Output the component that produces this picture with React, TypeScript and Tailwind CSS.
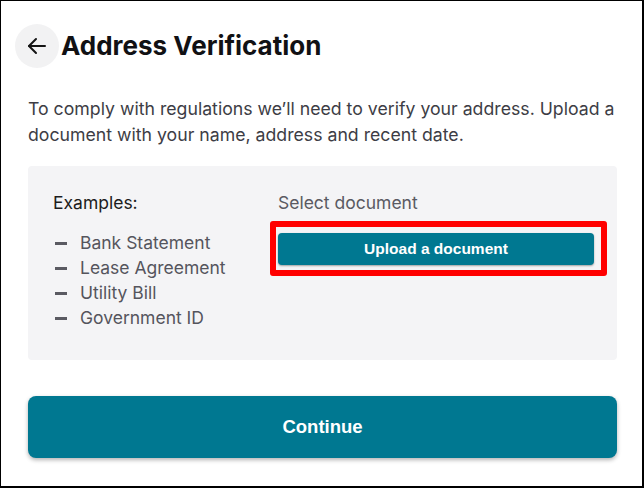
import React from "react";

export default function App() {
  const items = ["Bank Statement", "Lease Agreement", "Utility Bill", "Government ID"];
  return (
    <div className="w-[644px] h-[488px] bg-white border-l border-t border-r-2 border-b-2 border-black overflow-hidden font-['Inter',sans-serif]">
      <div className="pl-[27px] pr-[25px] pt-[23px]">
        <div className="flex items-center -ml-[13px]">
          <button className="w-[44px] h-[44px] rounded-full bg-[#f2f2f3] flex items-center justify-center">
            <svg width="24" height="24" viewBox="0 0 24 24" fill="none" stroke="#141414" strokeWidth="2" strokeLinecap="round" strokeLinejoin="round">
              <path d="M20 12H4" />
              <path d="M11 5l-7 7 7 7" />
            </svg>
          </button>
          <h1 className="ml-[2px] text-[26px] leading-[34px] font-bold text-[#111114]">Address Verification</h1>
        </div>
        <p className="mt-[28px] text-[17.7px] leading-[26px] text-[#3d3d45]">
          To comply with regulations we’ll need to verify your address. Upload a document with your name, address and recent date.
        </p>
        <div className="mt-[18px] h-[194px] rounded-[4px] bg-[#f4f4f6] flex pl-[25px] pt-[25px] pr-[23px]">
          <div className="w-[225px]">
            <div className="text-[17.5px] leading-[24px] text-[#1c1c20]">Examples:</div>
            <ul className="mt-[16px]">
              {items.map((t) => (
                <li key={t} className="flex items-center h-[25px] text-[17.5px] text-[#55555d]">
                  <span className="ml-[2px] w-[12px] h-[2.5px] bg-[#5a5a62] mr-[13px]"></span>
                  {t}
                </li>
              ))}
            </ul>
          </div>
          <div className="flex-1">
            <div className="text-[17.5px] leading-[24px] text-[#5a5a62]">Select document</div>
            <div className="relative mt-[18px]">
              <button className="w-full h-[32px] rounded-[4px] bg-[#007891] text-white text-[15.5px] font-bold font-['Liberation_Sans',Arial,sans-serif] shadow-[0_1px_2px_rgba(0,0,0,0.35)]">
                Upload a document
              </button>
              <div className="absolute left-[-8px] right-[-13px] top-[-12px] bottom-[-11px] border-[6px] border-[#ff0000] rounded-[3px] pointer-events-none"></div>
            </div>
          </div>
        </div>
        <button className="mt-[36px] w-full h-[62px] rounded-[8px] bg-[#007891] text-white text-[18.5px] font-bold font-['Liberation_Sans',Arial,sans-serif] shadow-[0_2px_4px_rgba(0,0,0,0.3)]">
          Continue
        </button>
      </div>
    </div>
  );
}
